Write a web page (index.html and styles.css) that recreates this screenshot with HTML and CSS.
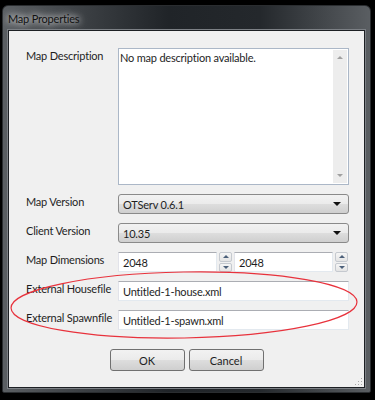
FILE: index.html
```html
<!DOCTYPE html>
<html lang="en">

<head>
    <meta charset="UTF-8">
    <meta name="viewport" content="width=device-width, initial-scale=1.0">
    <title>Map Properties</title>
    <link rel="stylesheet" href="styles.css">
</head>

<body>
    <div class="window">
        <div class="titlebar">
            <span class="title">Map Properties</span>
        </div>
        <div class="client">
            <div class="form">
                <label class="label">Map Description</label>
                <div class="desc-box">
                    <div class="desc-text">No map description available.</div>
                    <div class="scrollbar">
                        <span class="arrow-up"></span>
                        <span class="arrow-down"></span>
                    </div>
                </div>

                <label class="label">Map Version</label>
                <div class="select">
                    <span>OTServ 0.6.1</span>
                    <span class="drop"></span>
                </div>

                <label class="label">Client Version</label>
                <div class="select">
                    <span>10.35</span>
                    <span class="drop"></span>
                </div>

                <label class="label">Map Dimensions</label>
                <div class="dims">
                    <div class="input">2048</div>
                    <div class="spin">
                        <span class="spin-btn"><span class="spin-up"></span></span>
                        <span class="spin-btn"><span class="spin-down"></span></span>
                    </div>
                    <div class="input">2048</div>
                    <div class="spin">
                        <span class="spin-btn"><span class="spin-up"></span></span>
                        <span class="spin-btn"><span class="spin-down"></span></span>
                    </div>
                </div>

                <label class="label">External Housefile</label>
                <div class="input">Untitled-1-house.xml</div>

                <label class="label">External Spawnfile</label>
                <div class="input">Untitled-1-spawn.xml</div>
            </div>

            <div class="buttons">
                <button class="btn">OK</button>
                <button class="btn">Cancel</button>
            </div>

            <!-- red marker drawn over the dialog -->
            <svg class="marker" width="375" height="90" viewBox="0 0 375 90">
                <ellipse cx="183" cy="44" rx="173" ry="33" fill="none" stroke="#e8323c" stroke-width="1.2"
                    transform="rotate(-1 183 44)" />
            </svg>
            <div class="grip"></div>
        </div>
    </div>
</body>

</html>
```

FILE: styles.css
```css
body {
    margin: 0;
    padding: 0;
    background-color: #000;
    font-family: Lato, "Noto Sans", sans-serif;
    font-size: 11px;
    letter-spacing: -0.2px;
    color: #1e1e1e;
    width: 375px;
    height: 400px;
    overflow: hidden;
}

.window {
    margin: 5px 0 0 2px;
    width: 369px;
    height: 388px;
    box-sizing: border-box;
    border: 1px solid #2a2d30;
    border-radius: 6px 6px 2px 2px;
    background: linear-gradient(90deg, #5b5f63 0%, #3e4246 20%, #202428 45%, #24282c 70%, #5a5e62 100%);
    display: flex;
    flex-direction: column;
    padding: 0 5px 4px 5px;
}

.titlebar {
    height: 24px;
    display: flex;
    align-items: center;
}

.title {
    font-size: 11px;
    color: #111;
    text-shadow: 0 0 6px rgba(255, 255, 255, 0.9), 0 0 10px rgba(255, 255, 255, 0.7);
}

.client {
    position: relative;
    flex: 1;
    background-color: #f0f0f0;
    border: 1px solid #1d2024;
    box-shadow: 0 0 0 1px #7c8085;
    padding: 17px 0 0 17px;
}

.form {
    display: grid;
    grid-template-columns: 92px 231px;
    row-gap: 9px;
}

.label {
    padding-top: 1px;
    white-space: nowrap;
}

.desc-box {
    height: 137px;
    box-sizing: border-box;
    border: 1px solid #abb7c7;
    background-color: #fff;
    display: flex;
}

.desc-text {
    flex: 1;
    padding: 2px 1px;
}

.scrollbar {
    width: 14px;
    margin: 1px 1px 1px 0;
    background-color: #ededed;
    display: flex;
    flex-direction: column;
    justify-content: space-between;
    align-items: center;
    padding: 6px 0;
    box-sizing: border-box;
}

.arrow-up,
.arrow-down {
    width: 0;
    height: 0;
    border-left: 3px solid transparent;
    border-right: 3px solid transparent;
}

.arrow-up {
    border-bottom: 3px solid #a0a0a0;
}

.arrow-down {
    border-top: 3px solid #a0a0a0;
}

.select {
    height: 20px;
    box-sizing: border-box;
    border: 1px solid #8a8a8a;
    border-radius: 3px;
    background: linear-gradient(#f2f2f2 0%, #ebebeb 48%, #dddddd 52%, #cfcfcf 100%);
    display: flex;
    align-items: center;
    justify-content: space-between;
    padding: 0 7px 0 4px;
}

.drop {
    width: 0;
    height: 0;
    border-left: 4px solid transparent;
    border-right: 4px solid transparent;
    border-top: 4px solid #111;
}

.dims {
    display: flex;
    align-items: stretch;
    gap: 2px;
}

.dims .input {
    width: 99px;
}

.input {
    height: 20px;
    box-sizing: border-box;
    border: 1px solid #e3e9ef;
    border-top-color: #abadb3;
    border-left-color: #e2e3ea;
    background-color: #fff;
    padding: 0 4px;
    display: flex;
    align-items: center;
}

.spin {
    width: 13px;
    display: flex;
    flex-direction: column;
    gap: 1px;
}

.spin-btn {
    flex: 1;
    box-sizing: border-box;
    border: 1px solid #c5c9cf;
    border-radius: 2px;
    background: linear-gradient(#f6f6f6, #e4e4e4);
    display: flex;
    align-items: center;
    justify-content: center;
}

.spin-up,
.spin-down {
    width: 0;
    height: 0;
    border-left: 3px solid transparent;
    border-right: 3px solid transparent;
}

.spin-up {
    border-bottom: 3px solid #4c607a;
}

.spin-down {
    border-top: 3px solid #4c607a;
}

.buttons {
    display: flex;
    justify-content: center;
    gap: 4px;
    margin-top: 19px;
    padding-right: 17px;
}

.btn {
    width: 75px;
    height: 22px;
    font-family: Lato, "Noto Sans", sans-serif;
    font-size: 11px;
    color: #1e1e1e;
    border: 1px solid #707070;
    border-radius: 3px;
    background: linear-gradient(#f2f2f2 0%, #ebebeb 48%, #dddddd 52%, #cfcfcf 100%);
    padding: 0;
}

.marker {
    position: absolute;
    left: -8px;
    top: 230px;
    pointer-events: none;
}

.grip {
    position: absolute;
    right: 2px;
    bottom: 2px;
    width: 8px;
    height: 8px;
    background: radial-gradient(circle, #a8a8a8 0.8px, transparent 1px) 0 0 / 3px 3px;
    clip-path: polygon(100% 0, 100% 100%, 0 100%);
}
```
